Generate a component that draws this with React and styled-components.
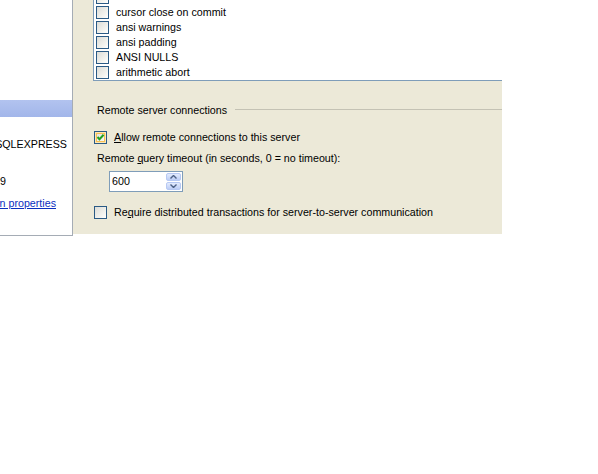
import React from "react";
import styled, { createGlobalStyle } from "styled-components";

const GlobalStyle = createGlobalStyle`
  body {
    margin: 0;
    background: #fff;
    font-family: "Liberation Sans", Arial, sans-serif;
    font-size: 10.7px;
    color: #000;
  }
`;

const Frame = styled.div`
  display: flex;
  align-items: flex-start;
  width: 502px;
`;

const NavPanel = styled.div`
  width: 73px;
  height: 236px;
  box-sizing: border-box;
  border-right: 1px solid #a5acb5;
  border-bottom: 1px solid #a5acb5;
  background: #fff;
  padding-top: 100px;
  display: flex;
  flex-direction: column;
`;

const NavHeader = styled.div`
  height: 17px;
  background: linear-gradient(to bottom, #b2c3ef, #a2b6ea);
`;

const InfoLine = styled.div`
  display: flex;
  justify-content: flex-end;
  overflow: hidden;
  white-space: nowrap;
  line-height: 13px;
  padding-right: ${(p) => p.$end}px;
  margin-top: ${(p) => p.$top}px;

  span {
    flex-shrink: 0;
  }
`;

const Link = styled.span`
  color: #0a2fc0;
  text-decoration: underline;
`;

const Pane = styled.div`
  flex: 1;
  height: 234px;
  background: #ece9d8;
  padding-left: 20px;
  display: flex;
  flex-direction: column;
  overflow: hidden;
`;

const ListBox = styled.div`
  height: 80px;
  flex-shrink: 0;
  background: #fff;
  border-left: 1px solid #7f9db9;
  border-bottom: 1px solid #7f9db9;
  display: flex;
  flex-direction: column;
  justify-content: flex-end;
  overflow: hidden;
`;

const ListRow = styled.div`
  height: 15px;
  flex-shrink: 0;
  display: flex;
  align-items: center;
  gap: 7px;
  padding-left: 2px;
  line-height: 13px;
  white-space: nowrap;
`;

const Box = styled.span`
  width: 13px;
  height: 13px;
  box-sizing: border-box;
  flex-shrink: 0;
  border: 1px solid #2a5a85;
  background: linear-gradient(135deg, #dcdcd7 0%, #f4f4f0 70%, #ffffff 100%);
  display: flex;
  align-items: center;
  justify-content: center;
  box-shadow: ${(p) =>
    p.$hot ? "inset 0 0 0 1px #fde7b4, inset 0 0 0 2px #f6bf55" : "none"};
`;

const GroupHead = styled.div`
  display: flex;
  align-items: center;
  gap: 8px;
  margin-top: 23px;
  padding-left: 4px;
  line-height: 13px;
  white-space: nowrap;
`;

const GroupRule = styled.div`
  flex: 1;
  border-top: 1px solid #c4c2b4;
  margin-top: -2px;
`;

const CheckRow = styled.div`
  display: flex;
  align-items: center;
  gap: 7px;
  height: 13px;
  line-height: 13px;
  padding-left: 1px;
  margin-top: ${(p) => p.$top}px;
  white-space: nowrap;
`;

const Label = styled.div`
  margin-top: 8px;
  padding-left: 4px;
  line-height: 13px;
  white-space: nowrap;
`;

const SpinBox = styled.div`
  margin-top: 6px;
  margin-left: 16px;
  width: 74px;
  height: 21px;
  box-sizing: border-box;
  border: 1px solid #7f9db9;
  background: #fff;
  display: flex;
  align-items: center;
  padding: 0 1px 0 2px;
`;

const SpinValue = styled.span`
  flex: 1;
  line-height: 13px;
`;

const SpinButtons = styled.div`
  display: flex;
  flex-direction: column;
  gap: 1px;
`;

const SpinButton = styled.span`
  width: 15px;
  height: 8px;
  box-sizing: border-box;
  border: 1px solid #b7c9f3;
  border-radius: 2px;
  background: linear-gradient(to bottom, #e3ebfd, #bccdf5);
  display: flex;
  align-items: center;
  justify-content: center;
`;

const Check = ({ checked, hot }) => (
  <Box $hot={hot}>
    {checked && (
      <svg width="9" height="9" viewBox="0 0 9 9">
        <path d="M1.5 4 L3.5 6.2 L7.6 1.8" fill="none" stroke="#21a121" strokeWidth="2" />
      </svg>
    )}
  </Box>
);

const Arrow = ({ up }) => (
  <svg width="7" height="4" viewBox="0 0 7 4">
    <path d={up ? "M0.5 3.5 L3.5 0.5 L6.5 3.5" : "M0.5 0.5 L3.5 3.5 L6.5 0.5"} fill="none" stroke="#4d6185" strokeWidth="1.4" />
  </svg>
);

// first entry is scrolled almost out of view: only its box shows
const options = [
  "",
  "cursor close on commit",
  "ansi warnings",
  "ansi padding",
  "ANSI NULLS",
  "arithmetic abort",
];

const App = () => {
  return (
    <>
      <GlobalStyle />
      <Frame>
        <NavPanel>
          <NavHeader />
          <InfoLine $end={5} $top={21}>
            <span>HOME-PC\SQLEXPRESS</span>
          </InfoLine>
          <InfoLine $end={66} $top={24}>
            <span>HOME-PC\User9</span>
          </InfoLine>
          <InfoLine $end={16} $top={9}>
            <Link>View connection properties</Link>
          </InfoLine>
        </NavPanel>
        <Pane>
          <ListBox>
            {options.map((o, i) => (
              <ListRow key={i}>
                <Check />
                {o && <span>{o}</span>}
              </ListRow>
            ))}
          </ListBox>
          <GroupHead>
            <span>Remote server connections</span>
            <GroupRule />
          </GroupHead>
          <CheckRow $top={14}>
            <Check checked hot />
            <span>
              <u>A</u>llow remote connections to this server
            </span>
          </CheckRow>
          <Label>
            Remote <u>q</u>uery timeout (in seconds, 0 = no timeout):
          </Label>
          <SpinBox>
            <SpinValue>600</SpinValue>
            <SpinButtons>
              <SpinButton>
                <Arrow up />
              </SpinButton>
              <SpinButton>
                <Arrow />
              </SpinButton>
            </SpinButtons>
          </SpinBox>
          <CheckRow $top={14}>
            <Check />
            <span>
              Re<u>q</u>uire distributed transactions for server-to-server communication
            </span>
          </CheckRow>
        </Pane>
      </Frame>
    </>
  );
};

export default App;
